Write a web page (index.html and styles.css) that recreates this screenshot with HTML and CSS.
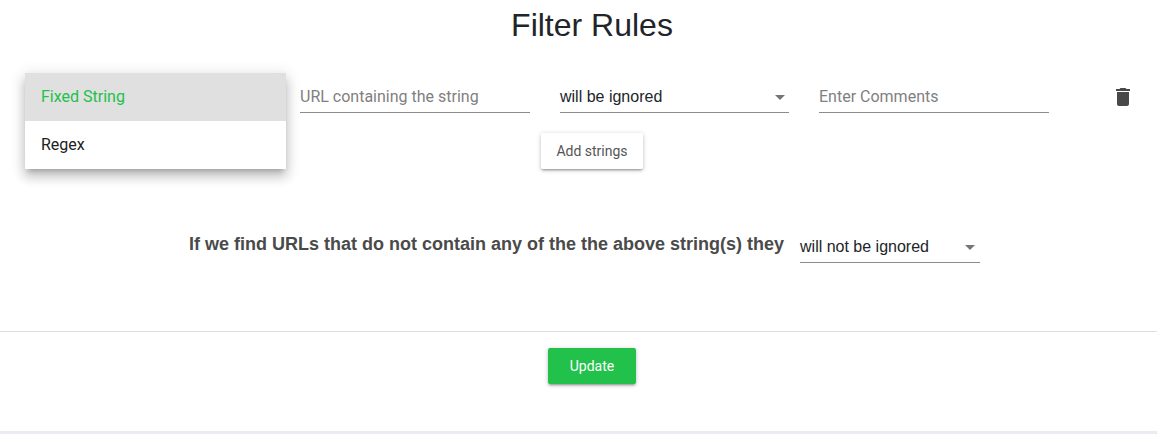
FILE: index.html
```html
<!DOCTYPE html>
<html lang="en">
<head>
    <meta charset="UTF-8">
    <title>Filter Rules</title>
    <link rel="stylesheet" href="styles.css">
</head>
<body>

<div class="rules">
    <h1 class="title">Filter Rules</h1>

    <div class="rule-row">
        <div class="field">
            <ul class="menu">
                <li class="menu-item selected">Fixed String</li>
                <li class="menu-item">Regex</li>
            </ul>
        </div>
        <div class="field">
            <div class="text-box placeholder">URL containing the string</div>
        </div>
        <div class="field narrow">
            <div class="select-box"><span>will be ignored</span><i class="caret"></i></div>
        </div>
        <div class="field">
            <div class="text-box placeholder">Enter Comments</div>
        </div>
        <button class="delete-btn" aria-label="Delete">
            <svg width="24" height="24" viewBox="0 0 24 24"><path fill="#484848" d="M6 19c0 1.1.9 2 2 2h8c1.1 0 2-.9 2-2V7H6v12zM19 4h-3.5l-1-1h-5l-1 1H5v2h14V4z"/></svg>
        </button>
    </div>

    <div class="add-wrap">
        <button class="add-btn">Add strings</button>
    </div>

    <div class="default-row">
        <span class="default-label">If we find URLs that do not contain any of the the above string(s) they</span>
        <div class="select-box default-select"><span>will not be ignored</span><i class="caret"></i></div>
    </div>
</div>

<div class="actions">
    <button class="update-btn">Update</button>
</div>

</body>
</html>
```

FILE: styles.css
```css
body {
    margin: 0;
    height: 434px;
    overflow: hidden;
    background-color: white;
    font-family: 'Liberation Sans', Arial, sans-serif;
    color: #212529;
    border-bottom: 3px solid #e9ecf2;
    box-sizing: border-box;
}
.rules {
    height: 331px;
    padding-left: 27px;
    box-sizing: border-box;
}
.title {
    margin: 0;
    padding-top: 6px;
    height: 67px;
    box-sizing: border-box;
    font-size: 32px;
    font-weight: 400;
    line-height: 38px;
    text-align: center;
}
.rule-row {
    display: flex;
    gap: 30px;
    padding-left: 13px;
    height: 60px;
}
.field {
    width: 230px;
    position: relative;
}
.field.narrow {
    width: 229px;
}
.text-box, .select-box {
    display: flex;
    justify-content: space-between;
    align-items: flex-end;
    height: 33px;
    margin-top: 7px;
    padding-bottom: 5px;
    border-bottom: 1px solid #8c8c8c;
    font-size: 16px;
    line-height: 20px;
}
.placeholder {
    font-family: 'Roboto', sans-serif;
    color: #7f7f7f;
}
.caret {
    width: 0;
    height: 0;
    margin: 0 4px 7px 0;
    border-left: 5px solid transparent;
    border-right: 5px solid transparent;
    border-top: 5px solid #757575;
}
.menu {
    position: absolute;
    top: 6px;
    left: -15px;
    width: 261px;
    margin: 0;
    padding: 0;
    list-style: none;
    background-color: white;
    box-shadow: 0 5px 5px -3px rgba(0,0,0,0.2), 0 8px 10px 1px rgba(0,0,0,0.14), 0 3px 14px 2px rgba(0,0,0,0.12);
    font-family: 'Roboto', sans-serif;
    font-size: 16px;
}
.menu-item {
    height: 48px;
    line-height: 48px;
    padding-left: 16px;
    color: #212121;
}
.menu-item.selected {
    background-color: #e0e0e0;
    color: #22c14b;
}
.delete-btn {
    display: flex;
    margin: 18px 0 0 32px;
    padding: 0;
    border: none;
    background: none;
    height: 24px;
}
.add-wrap {
    display: flex;
    justify-content: center;
    padding-top: 6px;
}
.add-btn {
    width: 102px;
    height: 36px;
    border: none;
    border-radius: 2px;
    background-color: white;
    color: #555;
    font-family: 'Roboto', sans-serif;
    font-size: 14px;
    box-shadow: 0 1px 5px rgba(0,0,0,0.2), 0 2px 2px rgba(0,0,0,0.14), 0 3px 1px -2px rgba(0,0,0,0.12);
}
.default-row {
    display: flex;
    justify-content: center;
    margin-right: 15px;
    padding-top: 51px;
    gap: 16px;
}
.default-label {
    margin-top: 12px;
    color: #4a4a4a;
    font-size: 18px;
    font-weight: 700;
    line-height: 24px;
}
.default-select {
    width: 180px;
    margin-top: 5px;
    height: 38px;
    box-sizing: border-box;
}
.default-select .caret {
    margin-right: 5px;
}
.actions {
    display: flex;
    justify-content: center;
    padding-left: 27px;
    padding-top: 16px;
    border-top: 1px solid #dedede;
}
.update-btn {
    width: 88px;
    height: 36px;
    border: none;
    border-radius: 2px;
    background-color: #22c14b;
    color: white;
    font-family: 'Roboto', sans-serif;
    font-size: 14px;
    box-shadow: 0 1px 5px rgba(0,0,0,0.2), 0 2px 2px rgba(0,0,0,0.14), 0 3px 1px -2px rgba(0,0,0,0.12);
}
```
